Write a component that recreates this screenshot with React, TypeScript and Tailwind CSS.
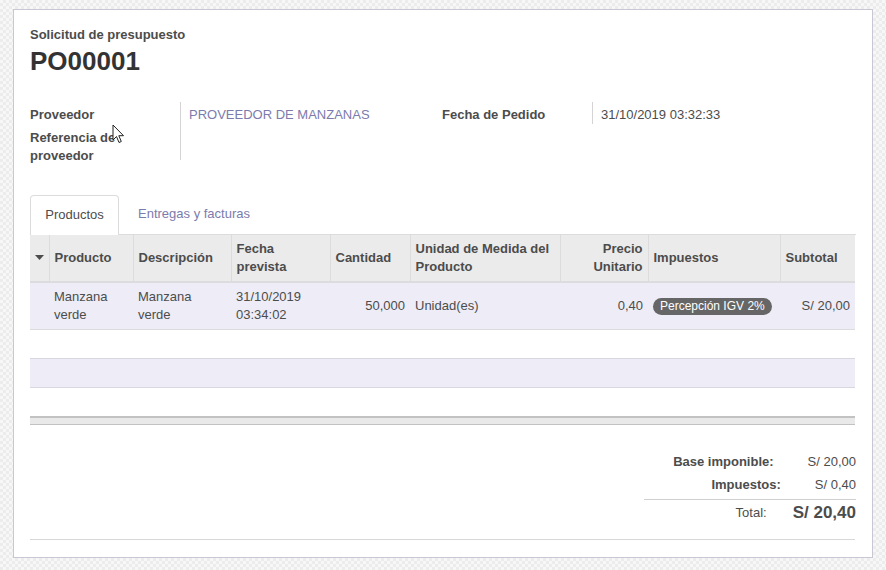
import React from "react"

const cols = [19, 84, 98, 99, 80, 150, 88, 132, 75]

function Cursor() {
  return (
    <svg
      className="absolute left-[112px] top-[124px]"
      width="13"
      height="20"
      viewBox="0 0 13 20"
    >
      <path
        d="M1 1 L1 16 L4.5 12.5 L7 18.5 L9.3 17.5 L6.8 11.7 L11.5 11.7 Z"
        fill="#fff"
        stroke="#222"
        strokeWidth="1"
        strokeLinejoin="round"
      />
    </svg>
  )
}

export default function App() {
  return (
    <div
      className="relative w-[886px] h-[570px] overflow-hidden bg-[repeating-conic-gradient(#ececec_0_25%,#f7f7f7_0_50%)] bg-[length:6px_6px] text-[13px] text-[#4c4c4c]"
      style={{ fontFamily: '"Liberation Sans", Arial, sans-serif' }}
    >
      <div className="absolute left-[13px] top-[9px] w-[860px] h-[549px] bg-white border border-[#c9c7d3] px-[16px] pt-[16px]">
        <div className="font-bold text-[13px] leading-[18px]">Solicitud de presupuesto</div>
        <h1 className="font-bold text-[26px] leading-[34px] text-[#333]">PO00001</h1>

        <div className="mt-[24px] flex">
          <div className="flex w-[412px]">
            <div className="w-[150px] font-bold leading-[18px] pt-[4px] flex flex-col gap-[5px]">
              <div>Proveedor</div>
              <div>Referencia de<br />proveedor</div>
            </div>
            <div className="border-l border-[#d4d4d4] pl-[8px] h-[58px] pt-[4px] leading-[18px] text-[#7c7bad]">
              PROVEEDOR DE MANZANAS
            </div>
          </div>
          <div className="flex">
            <div className="w-[150px] font-bold leading-[18px] pt-[4px]">Fecha de Pedido</div>
            <div className="border-l border-[#d4d4d4] pl-[8px] h-[22px] pt-[4px] leading-[18px]">
              31/10/2019 03:32:33
            </div>
          </div>
        </div>

        <div className="mt-[30px] flex border-b border-[#dcdcdc] h-[40px]">
          <div className="w-[89px] border border-b-0 border-[#dcdcdc] rounded-t-[4px] bg-white -mb-px flex items-center justify-center pb-[2px]">
            Productos
          </div>
          <div className="px-[19px] flex items-center text-[#7c7bad] pb-[2px]">Entregas y facturas</div>
        </div>

        <table className="table-fixed w-[825px] border-collapse">
          <colgroup>
            {cols.map((w, i) => (
              <col key={i} style={{ width: w }} />
            ))}
          </colgroup>
          <thead>
            <tr className="bg-[#ebebeb] h-[47px] border-b-2 border-[#dcdcdc] font-bold leading-[18px] text-left">
              <th className="px-[5px] border-r border-[#dcdcdc]">
                <svg width="9" height="6" viewBox="0 0 9 6">
                  <path d="M0 0 L9 0 L4.5 5 Z" fill="#4c4c4c" />
                </svg>
              </th>
              <th className="px-[5px] border-r border-[#dcdcdc]">Producto</th>
              <th className="px-[5px] border-r border-[#dcdcdc]">Descripción</th>
              <th className="px-[5px] border-r border-[#dcdcdc]">Fecha<br />prevista</th>
              <th className="px-[5px] border-r border-[#dcdcdc]">Cantidad</th>
              <th className="px-[5px] border-r border-[#dcdcdc]">Unidad de Medida del Producto</th>
              <th className="px-[5px] border-r border-[#dcdcdc] text-right">Precio<br />Unitario</th>
              <th className="px-[5px] border-r border-[#dcdcdc]">Impuestos</th>
              <th className="px-[5px]">Subtotal</th>
            </tr>
          </thead>
          <tbody>
            <tr className="bg-[#edecf7] h-[47px] border-b border-[#dcdcdc] leading-[18px]">
              <td />
              <td className="px-[5px]">Manzana<br />verde</td>
              <td className="px-[5px]">Manzana<br />verde</td>
              <td className="px-[5px]">31/10/2019<br />03:34:02</td>
              <td className="px-[5px] text-right">50,000</td>
              <td className="px-[5px]">Unidad(es)</td>
              <td className="px-[5px] text-right">0,40</td>
              <td className="px-[5px]">
                <span className="inline-block bg-[#666] text-white rounded-full px-[7px] text-[12px] leading-[17px]">
                  Percepción IGV 2%
                </span>
              </td>
              <td className="px-[5px] text-right">S/ 20,00</td>
            </tr>
            <tr className="h-[29px]">
              <td colSpan={9} />
            </tr>
            <tr className="h-[29px] bg-[#edecf7] border-y border-[#d8d7df]">
              <td colSpan={9} />
            </tr>
            <tr className="h-[29px]">
              <td colSpan={9} />
            </tr>
          </tbody>
        </table>
        <div className="w-[825px] h-[9px] bg-[#e9e9e9] border-t-2 border-b border-[#c2c2c2]" />

        <div className="mt-[25px] flex justify-end">
          <div className="w-[212px] leading-[18px]">
            <div className="flex justify-between py-[2.5px]">
              <span className="font-bold ml-auto mr-[34px]">Base imponible:</span>
              <span>S/ 20,00</span>
            </div>
            <div className="flex py-[2.5px]">
              <span className="font-bold ml-auto mr-[34px]">Impuestos:</span>
              <span>S/ 0,40</span>
            </div>
            <div className="flex items-center border-t border-[#cfcfcf] mt-[3px] h-[26px]">
              <span className="ml-auto mr-[26px]">Total:</span>
              <span className="font-bold text-[17px]">S/ 20,40</span>
            </div>
          </div>
        </div>

        <div className="mt-[14px] w-[825px] border-t border-[#d8d8d8]" />
      </div>
      <Cursor />
    </div>
  )
}
